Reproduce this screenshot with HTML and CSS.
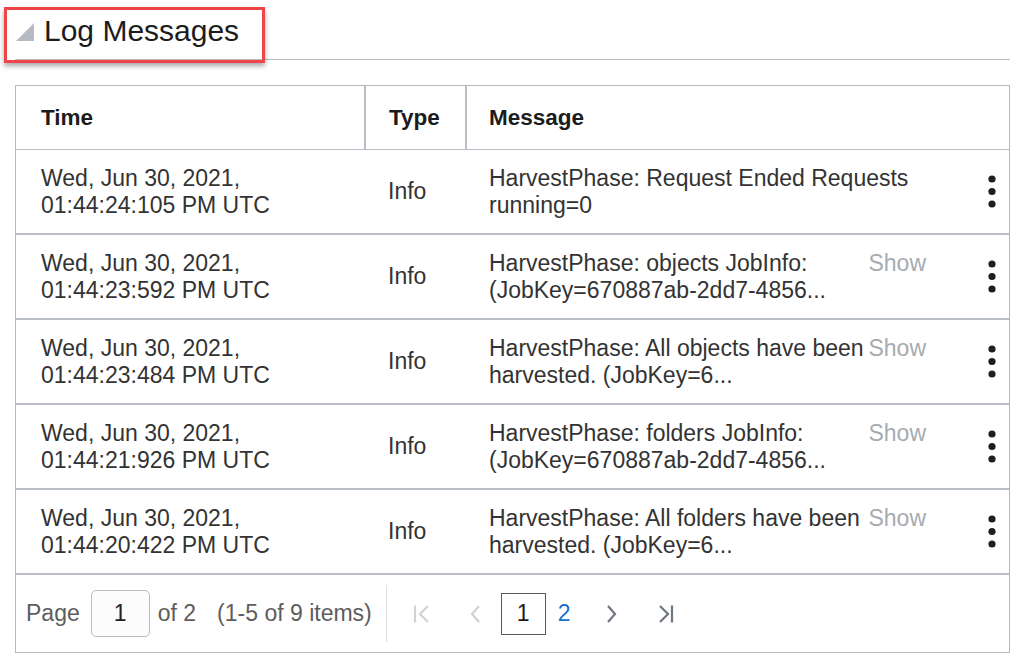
FILE: index.html
```html
<!DOCTYPE html>
<html>
<head>
<meta charset="utf-8">
<link rel="stylesheet" href="styles.css">
</head>
<body>
<div class="page">
  <div class="heading">
    <svg class="tri" width="18" height="18" viewBox="0 0 18 18"><polygon points="0,18 18,18 18,0" fill="#b6bbc3"/></svg>
    <span class="title">Log Messages</span>
  </div>
  <div class="annot"></div>

  <div class="table">
    <div class="row head">
      <div class="hcell c-time">Time</div>
      <div class="hcell c-type">Type</div>
      <div class="hcell c-msg hlast">Message</div>
    </div>

    <div class="row">
      <div class="cell c-time">Wed, Jun 30, 2021,<br>01:44:24:105 PM UTC</div>
      <div class="cell c-type">Info</div>
      <div class="cell c-msg">
        <div class="msgwrap"><div class="msg">HarvestPhase: Request Ended Requests<br>running=0</div></div>
        <svg class="kebab" width="24" height="34" viewBox="0 0 24 34"><circle cx="12" cy="4" r="3.6"/><circle cx="12" cy="16.5" r="3.6"/><circle cx="12" cy="29" r="3.6"/></svg>
      </div>
    </div>

    <div class="row">
      <div class="cell c-time">Wed, Jun 30, 2021,<br>01:44:23:592 PM UTC</div>
      <div class="cell c-type">Info</div>
      <div class="cell c-msg">
        <div class="msgwrap"><div class="msg">HarvestPhase: objects JobInfo:<br>(JobKey=670887ab-2dd7-4856...</div><span class="show">Show</span></div>
        <svg class="kebab" width="24" height="34" viewBox="0 0 24 34"><circle cx="12" cy="4" r="3.6"/><circle cx="12" cy="16.5" r="3.6"/><circle cx="12" cy="29" r="3.6"/></svg>
      </div>
    </div>

    <div class="row">
      <div class="cell c-time">Wed, Jun 30, 2021,<br>01:44:23:484 PM UTC</div>
      <div class="cell c-type">Info</div>
      <div class="cell c-msg">
        <div class="msgwrap"><div class="msg">HarvestPhase: All objects have been<br>harvested. (JobKey=6...</div><span class="show">Show</span></div>
        <svg class="kebab" width="24" height="34" viewBox="0 0 24 34"><circle cx="12" cy="4" r="3.6"/><circle cx="12" cy="16.5" r="3.6"/><circle cx="12" cy="29" r="3.6"/></svg>
      </div>
    </div>

    <div class="row">
      <div class="cell c-time">Wed, Jun 30, 2021,<br>01:44:21:926 PM UTC</div>
      <div class="cell c-type">Info</div>
      <div class="cell c-msg">
        <div class="msgwrap"><div class="msg">HarvestPhase: folders JobInfo:<br>(JobKey=670887ab-2dd7-4856...</div><span class="show">Show</span></div>
        <svg class="kebab" width="24" height="34" viewBox="0 0 24 34"><circle cx="12" cy="4" r="3.6"/><circle cx="12" cy="16.5" r="3.6"/><circle cx="12" cy="29" r="3.6"/></svg>
      </div>
    </div>

    <div class="row">
      <div class="cell c-time">Wed, Jun 30, 2021,<br>01:44:20:422 PM UTC</div>
      <div class="cell c-type">Info</div>
      <div class="cell c-msg">
        <div class="msgwrap"><div class="msg">HarvestPhase: All folders have been<br>harvested. (JobKey=6...</div><span class="show">Show</span></div>
        <svg class="kebab" width="24" height="34" viewBox="0 0 24 34"><circle cx="12" cy="4" r="3.6"/><circle cx="12" cy="16.5" r="3.6"/><circle cx="12" cy="29" r="3.6"/></svg>
      </div>
    </div>

    <div class="footer">
      <span class="lbl">Page</span>
      <div class="pinput">1</div>
      <span class="lbl of">of 2</span>
      <span class="lbl items">(1-5 of 9 items)</span>
      <div class="sep"></div>
      <svg class="nav nav-first" width="18" height="20" viewBox="0 0 18 20"><path d="M2 1.5 V18.5 M15 2 L7 10 L15 18" fill="none" stroke="#cfd2d7" stroke-width="2.2"/></svg>
      <svg class="nav nav-prev" width="12" height="20" viewBox="0 0 12 20"><path d="M10 2 L3 10 L10 18" fill="none" stroke="#cfd2d7" stroke-width="2.2"/></svg>
      <div class="pg cur">1</div>
      <div class="pg link">2</div>
      <svg class="nav nav-next" width="12" height="20" viewBox="0 0 12 20"><path d="M2 2 L9 10 L2 18" fill="none" stroke="#6e7680" stroke-width="2.2"/></svg>
      <svg class="nav nav-last" width="18" height="20" viewBox="0 0 18 20"><path d="M2 2 L10 10 L2 18 M14 1.5 V18.5" fill="none" stroke="#6e7680" stroke-width="2.2"/></svg>
    </div>
  </div>
</div>
</body>
</html>
```

FILE: styles.css
```css
* { box-sizing: border-box; }
html, body { margin: 0; padding: 0; background: #ffffff; }
body {
  font-family: "Liberation Sans", Arial, sans-serif;
  color: #333333;
  width: 1023px;
  height: 661px;
  overflow: hidden;
}
.page {
  position: relative;
  margin: 0 13px 0 15px;
}
.heading {
  height: 60px;
  border-bottom: 1px solid #b9bdc5;
  display: flex;
  align-items: center;
  padding-top: 3px;
}
.tri {
  margin-left: 1px;
  margin-top: 1px;
}
.title {
  font-size: 30px;
  color: #1c1c1c;
  margin-left: 10px;
}
.annot {
  position: absolute;
  left: -11px;
  top: 7px;
  width: 261px;
  height: 56px;
  border: 3px solid #ee4549;
  box-shadow: 0 3px 5px rgba(0, 0, 0, 0.35);
}
.table {
  margin-top: 25px;
  border: 1px solid #b4b9c1;
  font-size: 23px;
}
.row {
  display: grid;
  grid-template-columns: 350px 101px 1fr;
  height: 85px;
  border-bottom: 2px solid #b9bdc5;
}
.row.head {
  height: 64px;
  border-bottom: 1px solid #b9bdc5;
}
.hcell {
  display: flex;
  align-items: center;
  font-weight: bold;
  color: #1c1c1c;
  font-size: 22.5px;
  border-right: 2px solid #b9bdc5;
}
.hcell.hlast { border-right: none; }
.cell {
  display: flex;
  align-items: center;
  white-space: nowrap;
}
.c-time { padding-left: 25px; }
.c-type { padding-left: 22px; }
.hcell.c-type { padding-left: 23px; }
.c-msg { padding-left: 22px; padding-right: 5px; }
.msgwrap {
  flex: 1;
  display: flex;
  align-items: flex-start;
}
.msg { flex: 1; }
.show {
  color: #a7abb1;
  margin-right: 54px;
}
.kebab { fill: #1e1e1e; flex: none; }
.footer {
  height: 77px;
  display: flex;
  align-items: center;
  padding-left: 10px;
  font-size: 23px;
}
.lbl { color: #5d5d5d; }
.pinput {
  width: 59px;
  height: 47px;
  border: 1px solid #b9bdc5;
  border-radius: 5px;
  background: #fcfcfc;
  margin-left: 11px;
  display: flex;
  align-items: center;
  justify-content: center;
  color: #222;
}
.of { margin-left: 8px; }
.items { margin-left: 21px; }
.sep {
  width: 1px;
  height: 57px;
  background: #dcdfe3;
  margin-left: 14px;
}
.nav { flex: none; }
.nav-first { margin-left: 26px; }
.nav-prev { margin-left: 38px; }
.pg {
  height: 42px;
  display: flex;
  align-items: center;
  justify-content: center;
}
.pg.cur {
  width: 45px;
  border: 1px solid #5a5a5a;
  color: #1c1c1c;
  margin-left: 20px;
}
.pg.link {
  color: #1670cf;
  margin-left: 12px;
}
.nav-next { margin-left: 35px; }
.nav-last { margin-left: 40px; }
```
